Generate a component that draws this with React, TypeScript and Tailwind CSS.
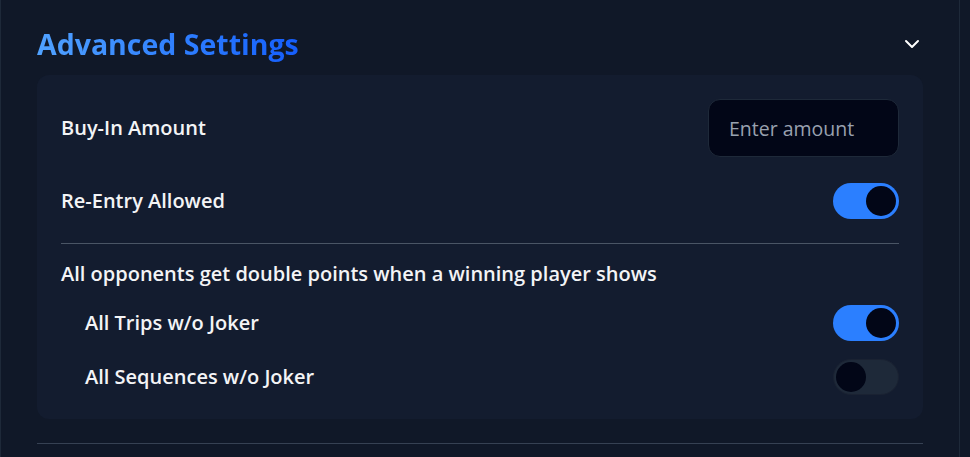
import React, { useState } from 'react'

function Toggle({ on, onChange }: { on: boolean; onChange: () => void }) {
  return (
    <button
      onClick={onChange}
      className={
        on
          ? 'flex h-9 w-[66px] items-center justify-end rounded-full bg-blue-500 p-[3px]'
          : 'flex h-9 w-[66px] items-center justify-start rounded-full border border-[#1a2232] bg-gray-800 p-[2px]'
      }
    >
      <span className="h-[30px] w-[30px] rounded-full bg-[#020617]" />
    </button>
  )
}

export default function App() {
  const [reEntry, setReEntry] = useState(true)
  const [trips, setTrips] = useState(true)
  const [sequences, setSequences] = useState(false)

  return (
    <div
      className="h-[457px] w-full overflow-hidden bg-gray-900 text-gray-100"
      style={{ fontFamily: '"Open Sans", "Noto Sans", sans-serif' }}
    >
      <div className="h-full w-[960px] border-x border-gray-800 px-9 pt-[26px]">
        <div className="flex h-9 items-center justify-between">
          <h2 className="bg-gradient-to-r from-blue-400 to-blue-600 bg-clip-text text-[28.5px] font-bold text-transparent">
            Advanced Settings
          </h2>
          <svg width="16" height="10" viewBox="0 0 16 10" className="mr-[3px]">
            <path d="M2 2l6 6 6-6" fill="none" stroke="white" strokeWidth="2" strokeLinecap="round" strokeLinejoin="round" />
          </svg>
        </div>

        <div className="mt-[13px] rounded-xl bg-[#131c2f] p-6">
          <div className="flex items-center justify-between">
            <span className="text-xl font-semibold">Buy-In Amount</span>
            <input
              placeholder="Enter amount"
              className="h-[58px] w-[191px] rounded-xl border border-gray-800 bg-[#020617] px-5 text-[19.5px] text-white placeholder:text-gray-400 outline-none"
            />
          </div>

          <div className="mt-[26px] flex items-center justify-between">
            <span className="text-xl font-semibold">Re-Entry Allowed</span>
            <Toggle on={reEntry} onChange={() => setReEntry(!reEntry)} />
          </div>

          <div className="mt-6 border-t border-gray-600" />

          <div className="mt-4 text-xl font-semibold">
            All opponents get double points when a winning player shows
          </div>

          <div className="mt-[17px] flex flex-col gap-[18px] pl-6">
            <div className="flex items-center justify-between">
              <span className="text-xl font-semibold">All Trips w/o Joker</span>
              <Toggle on={trips} onChange={() => setTrips(!trips)} />
            </div>
            <div className="flex items-center justify-between">
              <span className="text-xl font-semibold">All Sequences w/o Joker</span>
              <Toggle on={sequences} onChange={() => setSequences(!sequences)} />
            </div>
          </div>
        </div>

        <div className="mt-6 border-t border-gray-700" />
      </div>
    </div>
  )
}
